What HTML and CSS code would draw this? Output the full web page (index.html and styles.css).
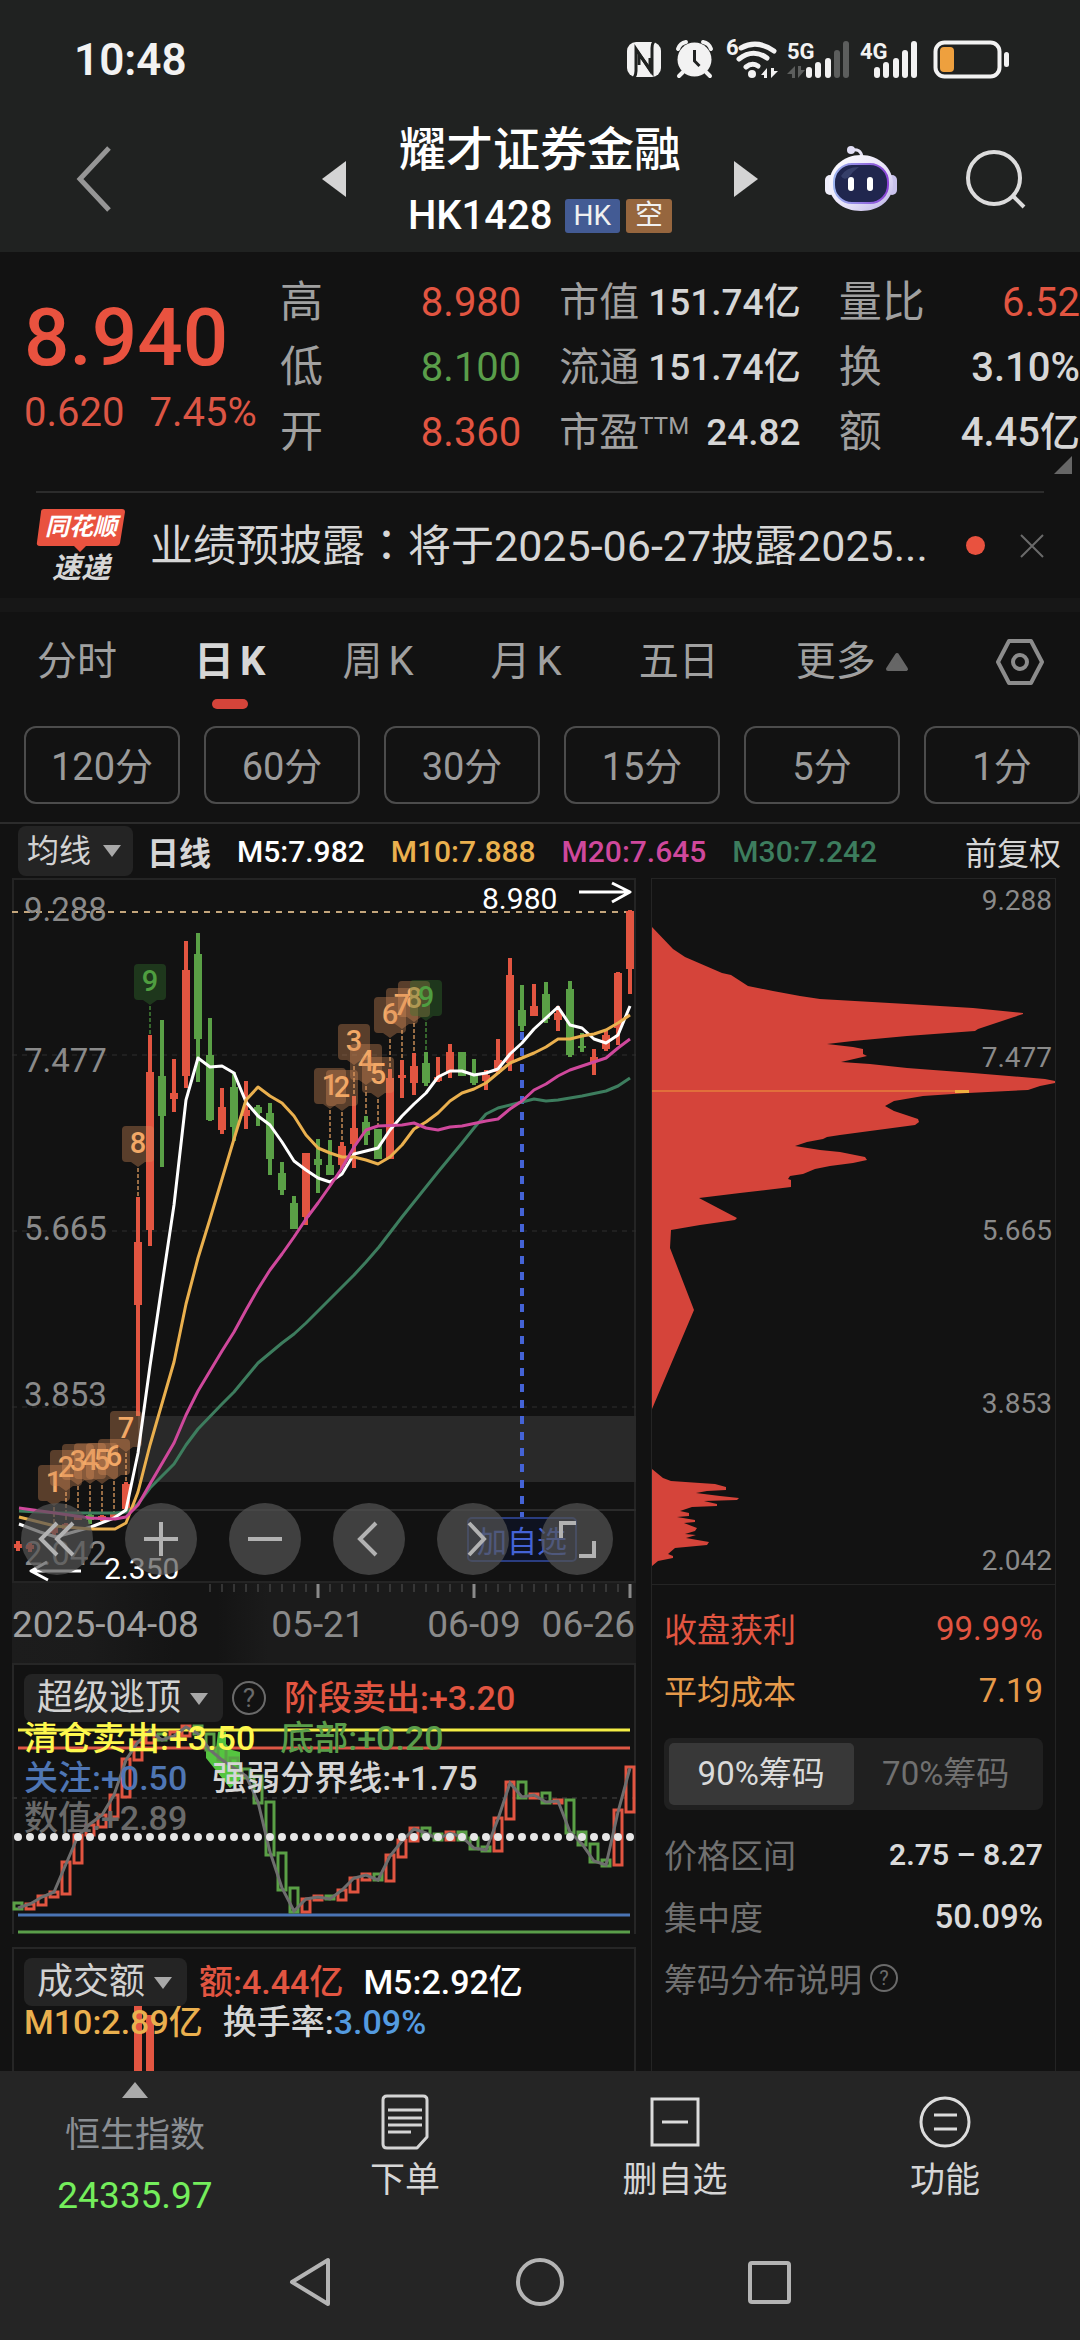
FILE: index.html
```html
<!DOCTYPE html>
<html lang="zh-CN">
<head>
<meta charset="utf-8">
<meta name="viewport" content="width=device-width">
<title>耀才证券金融 HK1428</title>
<link rel="stylesheet" href="styles.css">
</head>
<body>
<header class="top">
  <div class="status">
    <span class="clock">10:48</span>
    <div class="status-icons">
      <svg width="34" height="40" viewBox="628 40 34 40"><rect x="628" y="42" width="34" height="35" rx="9" fill="#f2f2f2"/><g fill="none" stroke="#202221" stroke-width="3"><path d="M635 78q2-3 2-7V49l14 21V58"/><path d="M655 41q-2 3-2 7v24l-13-18v11"/></g></svg>
      <svg class="gap-l" width="38" height="40" viewBox="677 40 38 40"><g fill="none" stroke="#f2f2f2" stroke-width="4" stroke-linecap="round"><path d="M679 49q2-6 8-7M712 49q-2-6-8-7M684 72l-4 4M707 72l4 4"/></g><circle cx="695.500" cy="59.500" r="17" fill="#f2f2f2"/><path d="M695.500 50v11l5 5" fill="none" stroke="#202221" stroke-width="3"/></svg>
      <svg class="gap-m" width="52" height="46" viewBox="727 34 52 46"><text x="727" y="55" class="sig-t">6</text><g fill="none" stroke="#f2f2f2" stroke-width="5" stroke-linecap="round"><path d="M742 48q16-9 33 3M740 59q14-11 28-1M747 67q6-5 12-1"/></g><circle cx="753" cy="74" r="4" fill="#f2f2f2"/><path d="M768 78V68l-6 7h3v3zM772 68v10l7-7h-4v-3z" fill="#f2f2f2"/></svg>
      <svg class="gap-s" width="64" height="40" viewBox="788 40 64 40"><text x="788" y="59" class="sig-t">5G</text><path d="M796 78V66l-8 8h5v4zM799 66v12l7-8h-4v-4z" fill="#5c5e5d"/><g fill="#f2f2f2"><rect x="807" y="67" width="6" height="11" rx="3"/><rect x="816" y="62" width="6" height="16" rx="3"/><rect x="826" y="58" width="6" height="20" rx="3"/></g><g fill="#5c5e5d"><rect x="835" y="50" width="6" height="28" rx="3"/><rect x="844" y="41" width="6" height="37" rx="3"/></g></svg>
      <svg class="gap-s" width="58" height="40" viewBox="861 40 58 40"><text x="861" y="59" class="sig-t">4G</text><g fill="#f2f2f2"><rect x="875" y="67" width="6" height="11" rx="3"/><rect x="884" y="62" width="6" height="16" rx="3"/><rect x="894" y="58" width="6" height="20" rx="3"/><rect x="903" y="50" width="6" height="28" rx="3"/><rect x="912" y="41" width="6" height="37" rx="3"/></g></svg>
      <svg class="gap-l" width="77" height="40" viewBox="933 40 77 40"><rect x="935.500" y="42.500" width="64" height="34" rx="9" fill="none" stroke="#f2f2f2" stroke-width="4"/><rect x="940" y="47" width="14" height="25" rx="4" fill="#eea03e"/><rect x="1004" y="52" width="5" height="15" rx="2.500" fill="#f2f2f2"/></svg>
    </div>
  </div>
  <div class="titlebar">
    <button class="icon-btn back" aria-label="返回"><svg width="36" height="66" viewBox="0 0 36 66"><path d="M33 2L4 33l29 31" fill="none" stroke="#969696" stroke-width="5"/></svg></button>
    <div class="switcher">
      <button class="icon-btn" aria-label="上一只"><svg width="24" height="36" viewBox="0 0 24 36"><path d="M24 0v36L0 18z" fill="#d4d4d4"/></svg></button>
      <div class="stock">
        <h1>耀才证券金融</h1>
        <div class="code"><span>HK1428</span><span class="tag blue">HK</span><span class="tag brown">空</span></div>
      </div>
      <button class="icon-btn" aria-label="下一只"><svg width="24" height="36" viewBox="0 0 24 36"><path d="M0 0v36l24-18z" fill="#d4d4d4"/></svg></button>
    </div>
    <div class="tools">
      <button class="icon-btn" aria-label="智能助手"><svg width="72" height="66" viewBox="0 0 72 66"><defs><linearGradient id="shell" x1="0" y1="0" x2="1" y2="1"><stop offset="0" stop-color="#fff"/><stop offset=".6" stop-color="#e6e1f8"/><stop offset="1" stop-color="#b9b0e6"/></linearGradient><linearGradient id="rim" x1="0" y1="0" x2="1" y2="0"><stop offset="0" stop-color="#9db4f0"/><stop offset="1" stop-color="#8a43d6"/></linearGradient></defs><path d="M26 4q10-2 11 7" fill="none" stroke="#e6e3f5" stroke-width="3"/><circle cx="26" cy="4" r="4" fill="#e2dff6"/><rect x="0" y="29" width="10" height="20" rx="5" fill="#efeefb"/><rect x="62" y="29" width="10" height="20" rx="5" fill="#c9c2ec"/><path d="M36 9c18 0 32 13 32 29S54 65 36 65 4 54 4 38 18 9 36 9z" fill="url(#shell)"/><rect x="9" y="18" width="54" height="39" rx="18" fill="#20264e" stroke="url(#rim)" stroke-width="2"/><path d="M16 30q5-9 18-9-6 4-10 10-5 4-8-1z" fill="#46507c" opacity=".6"/><rect x="23" y="31" width="6" height="14" rx="3" fill="#fff"/><rect x="42" y="31" width="6" height="14" rx="3" fill="#fff"/></svg></button>
      <button class="icon-btn" aria-label="搜索"><svg width="60" height="60" viewBox="0 0 60 60"><g fill="none" stroke="#dcdcdc" stroke-width="4"><circle cx="28" cy="29" r="26"/><path d="M47 47l11 11"/></g></svg></button>
    </div>
  </div>
</header>

<main>
<section class="quote">
  <div class="price">
    <div class="last">8.940</div>
    <div class="chg"><span>0.620</span><span>7.45%</span></div>
  </div>
  <dl class="stats">
    <div><dt>高</dt><dd class="up">8.980</dd></div>
    <div class="mid"><dt>市值</dt><dd>151.74亿</dd></div>
    <div><dt>量比</dt><dd class="up">6.52</dd></div>
    <div><dt>低</dt><dd class="down">8.100</dd></div>
    <div class="mid"><dt>流通</dt><dd>151.74亿</dd></div>
    <div><dt>换</dt><dd>3.10%</dd></div>
    <div><dt>开</dt><dd class="up">8.360</dd></div>
    <div class="mid"><dt>市盈<sup>TTM</sup></dt><dd>24.82</dd></div>
    <div><dt>额</dt><dd>4.45亿</dd></div>
  </dl>
  <svg class="expand" width="18" height="18" viewBox="0 0 18 18"><path d="M18 0v18H0z" fill="#666"/></svg>
</section>

<section class="news">
  <div class="logo">
    <svg width="90" height="44" viewBox="0 0 90 44"><path d="M8 1h78q3 0 3 3l-5 31q-1 3-4 3H50l-6 6-6-6H4q-4 0-3-4L5 4q0-3 3-3z" fill="#e9523f"/></svg>
    <span class="logo-a">同花顺</span>
    <span class="logo-b">速递</span>
  </div>
  <a class="headline" href="#news">业绩预披露<span class="colon" lang="zh-Hant">：</span>将于2025-06-27披露2025...</a>
  <span class="dot"></span>
  <button class="icon-btn" aria-label="关闭"><svg width="24" height="24" viewBox="0 0 24 24"><path d="M1 1l22 22M23 1L1 23" stroke="#6a6a6a" stroke-width="2"/></svg></button>
</section>

<nav class="tabs">
  <button>分时</button><button class="on">日<span>K</span></button><button>周<span>K</span></button><button>月<span>K</span></button><button>五日</button>
  <button class="more">更多<svg width="24" height="20" viewBox="0 0 24 20"><path d="M12 3l9 14H3z" fill="#666" stroke="#666" stroke-width="4" stroke-linejoin="round"/></svg></button>
  <button class="gear" aria-label="设置"><svg width="48" height="48" viewBox="0 0 48 48"><g fill="none" stroke="#8c8c8c" stroke-width="4"><path d="M13 3h22l11 21-11 21H13L2 24z" stroke-linejoin="round"/><circle cx="24" cy="24" r="7"/></g></svg></button>
</nav>
<div class="periods">
  <button>120分</button><button>60分</button><button>30分</button><button>15分</button><button>5分</button><button>1分</button>
</div>

<div class="ma-bar">
  <span class="pick small"><select aria-label="主图指标"><option>均线</option></select></span>
  <b class="line-name">日线</b>
  <span class="w">M5:7.982</span><span class="m10">M10:7.888</span><span class="m20">M20:7.645</span><span class="m30">M30:7.242</span>
  <span class="adj">前复权</span>
</div>

<div class="charts">
  <div class="col-main">
    <div class="panel">
      <svg class="plot" viewBox="12 878 624 705">
        <rect x="13" y="879" width="622" height="703" fill="none" stroke="#242424" stroke-width="2"/>
        <path d="M12 1055H636M12 1231H636M12 1407H636" stroke="#2e2e2e" stroke-dasharray="5 5"/>
        <rect x="138" y="1416" width="498" height="66" fill="#292929"/>
        <path d="M126 1510H636" stroke="#2b2b2b" stroke-width="2"/>
        <path d="M12 912H634" stroke="#c4a67c" stroke-width="2" stroke-dasharray="6 6"/>
        <g class="axis-l"><text x="24" y="921">9.288</text><text x="24" y="1072">7.477</text><text x="24" y="1240">5.665</text><text x="24" y="1406">3.853</text><text x="24" y="1565">2.042</text></g>
        <g id="candles"></g>
        <path d="M522 1032V1517" stroke="#4463d6" stroke-width="4" stroke-dasharray="8 8"/>
        <rect x="468" y="1518" width="108" height="43" rx="4" fill="#0e1220" stroke="#2a3d80" stroke-width="2"/>
        <text x="522" y="1552" text-anchor="middle" class="fav">加自选</text>
        <g id="tags"></g>
        <g fill="none" stroke-width="3" stroke-linejoin="round">
          <path stroke="#3d7d5e" d="M19 1511L60 1513 115 1513 126 1512 138 1504 150 1488 174 1464 186 1445 198 1429 222 1404 234 1392 258 1363 282 1343 294 1334 306 1323 330 1299 340 1289 354 1275 366 1262 379 1247 402 1217 414 1202 438 1172 462 1143 474 1128 486 1114 498 1108 522 1102 534 1099 546 1101 558 1100 582 1096 606 1091 618 1086 630 1078"/>
          <path stroke="#fff" d="M19 1524L40 1532 56 1537 91 1527 114 1518 126 1510 138 1453 150 1366 162 1285 174 1205 186 1100 198 1058 210 1067 222 1066 234 1073 246 1102 258 1116 270 1125 282 1142 294 1161 306 1170 318 1178 330 1182 342 1174 354 1154 366 1151 378 1148 390 1130 402 1116 414 1104 426 1093 438 1077 450 1071 462 1071 474 1075 486 1073 498 1069 510 1054 522 1043 534 1029 546 1018 558 1007 570 1025 582 1028 594 1039 606 1043 618 1035 630 1006"/>
          <path stroke="#eab04e" d="M19 1517L55 1526 90 1529 115 1529 126 1523 138 1492 150 1445 174 1362 186 1304 198 1258 210 1219 222 1179 234 1139 246 1100 258 1087 270 1096 282 1103 294 1116 306 1135 318 1148 330 1153 342 1157 354 1157 366 1160 378 1164 390 1157 402 1145 414 1129 426 1122 438 1113 450 1101 462 1093 474 1089 486 1083 498 1073 510 1063 522 1058 534 1053 546 1047 558 1039 570 1039 582 1036 594 1034 606 1030 618 1023 630 1015"/>
          <path stroke="#cf489c" d="M19 1508L55 1513 90 1518 115 1519 126 1517 138 1505 150 1484 174 1443 186 1415 198 1391 222 1351 234 1332 246 1310 258 1289 270 1270 282 1254 294 1237 306 1219 318 1203 330 1186 342 1168 354 1147 366 1130 378 1126 402 1125 414 1123 426 1128 438 1130 450 1127 462 1126 486 1121 498 1119 510 1109 522 1101 534 1090 546 1084 558 1076 570 1070 582 1066 594 1062 606 1058 618 1048 630 1039"/>
          <path stroke="#fff" d="M579 892H630M612 883L630 892 612 902M81 1571H31M47 1562L31 1571 48 1580"/>
        </g>
        <g class="mark"><text x="482" y="909">8.980</text><text x="104" y="1579">2.350</text></g>
      </svg>
      <div class="chart-tools">
        <button aria-label="快退"><svg viewBox="0 0 72 72"><path d="M36 20L20 36l16 16M52 20L36 36l16 16"/></svg></button>
        <button aria-label="放大"><svg viewBox="0 0 72 72"><path d="M19 36h34M36 19v34"/></svg></button>
        <button aria-label="缩小"><svg viewBox="0 0 72 72"><path d="M19 36h34"/></svg></button>
        <button aria-label="左移"><svg viewBox="0 0 72 72"><path d="M43 20L27 36l16 16"/></svg></button>
        <button aria-label="右移"><svg viewBox="0 0 72 72"><path d="M32 20l15 16-15 16"/></svg></button>
        <button aria-label="全屏"><svg viewBox="0 0 72 72"><path d="M20 35V20h15M38 53h15V38"/></svg></button>
      </div>
    </div>
    <svg class="plot" viewBox="12 1583 624 80">
      <defs><linearGradient id="fade"><stop offset="0" stop-color="#1c1c1c"/><stop offset=".12" stop-color="#1b1b1b"/><stop offset=".26" stop-color="#141414"/><stop offset=".33" stop-color="#141414"/><stop offset=".41" stop-color="#1b1b1b"/></linearGradient></defs>
      <rect x="12" y="1583" width="624" height="80" fill="url(#fade)"/>
      <g id="ticks"></g>
      <g class="dates"><text x="12" y="1637" class="first">2025-04-08</text><text x="318" y="1637" text-anchor="middle">05-21</text><text x="474" y="1637" text-anchor="middle">06-09</text><text x="635" y="1637" text-anchor="end">06-26</text></g>
    </svg>
    <div class="panel sub">
      <svg class="plot" viewBox="12 1663 624 271">
        <path d="M13 1934V1664H635V1934" fill="none" stroke="#262626" stroke-width="2"/>
        <path d="M12 1798H636" stroke="#2c2c2c" stroke-width="2" stroke-dasharray="5 5"/>
        <path d="M18 1915H630" stroke="#4a74b4" stroke-width="3"/>
        <path d="M18 1932H630" stroke="#5a9e4a" stroke-width="3"/>
        <path d="M18 1730H630" stroke="#f4ee45" stroke-width="3"/>
        <path d="M18 1748H630" stroke="#de5745" stroke-width="3"/>
        <path d="M206 1748l10 1 2-17h8v12l6 6 8 2v28l-10 8-8-10-8-10-8-10z" fill="#55c540"/>
        <g id="bars" fill="none" stroke-width="3"></g>
        <path fill="none" stroke="#6e6e6e" stroke-width="3" d="M18 1908L30 1904 42 1897 54 1892 66 1864 78 1836 90 1824 102 1815 114 1795 126 1760 138 1742 150 1731 162 1740 174 1736 186 1727 198 1734 210 1750 222 1760 234 1768 246 1776 258 1802 270 1852 282 1888 294 1911 306 1899 318 1897 330 1899 342 1890 354 1878 366 1875 378 1880 390 1856 402 1841 414 1829 426 1833 438 1839 450 1833 462 1837 474 1848 486 1850 498 1819 510 1783 522 1797 534 1795 546 1802 558 1801 570 1832 582 1844 594 1861 606 1865 618 1812 630 1768"/>
        <path d="M18 1837H631" stroke="#e6e6e6" stroke-width="8" stroke-linecap="round" stroke-dasharray="0 12"/>
      </svg>
      <div class="legend">
        <div class="row"><span class="pick"><select aria-label="副图指标"><option>超级逃顶</option></select></span><button class="help" aria-label="说明">?</button><span class="up after-help">阶段卖出:+3.20</span></div>
        <div class="row"><span class="yellow">清仓卖出:+3.50</span><span class="down">底部:+0.20</span></div>
        <div class="row"><span class="blue-t">关注:+0.50</span><span>强弱分界线:+1.75</span></div>
        <div class="row"><span class="dim">数值:+2.89</span></div>
      </div>
    </div>
    <div class="panel">
      <svg class="plot" viewBox="12 1947 624 124">
        <path d="M13 2072V1948H635V2072" fill="none" stroke="#262626" stroke-width="2"/>
        <path d="M138 2000V2071M150 2015V2071" stroke="#e25541" stroke-width="8"/>
      </svg>
      <div class="legend tight">
        <div class="row"><span class="pick"><select aria-label="成交指标"><option>成交额</option></select></span><span class="up after-pick">额:4.44亿</span><span class="w">M5:2.92亿</span></div>
        <div class="row"><span class="m10">M10:2.89亿</span><span>换手率:<i>3.09%</i></span></div>
      </div>
    </div>
  </div>

  <div class="col-side">
    <svg class="plot" viewBox="651 877 405 707">
      <path d="M652 926L673 948 685 956 722 972 731 974 748 985 773 990 800 995 820 998 907 1003 973 1007 1023 1012 1023 1013 978 1028 975 1030 907 1035 853 1040 827 1043 853 1046 863 1048 863 1053 867 1055 841 1061 870 1063 907 1067 973 1072 1045 1078 1055 1080 1055 1082 1040 1085 1028 1089 968 1092 923 1095 894 1100 885 1105 894 1110 918 1118 919 1121 915 1124 870 1130 840 1134 827 1136 823 1138 807 1141 795 1145 820 1149 840 1151 865 1156 867 1159 853 1162 830 1165 815 1168 803 1173 790 1175 788 1178 791 1179 791 1186 740 1192 699 1197 737 1217 735 1219 700 1224 671 1229 670 1247 694 1309 652 1408z" fill="#d5443a"/>
      <path d="M652 1468L663 1477 671 1480 700 1482 715 1483 726 1486 726 1489 707 1490 696 1492 720 1495 739 1497 737 1499 704 1500 717 1503 717 1505 692 1506 680 1510 689 1512 689 1515 677 1516 695 1519 695 1521 684 1522 697 1527 695 1530 685 1533 696 1534 686 1537 709 1541 707 1544 675 1547 668 1553 673 1555 673 1557 658 1560 652 1565z" fill="#d5443a"/>
      <path d="M652 1090H956" stroke="#ee9a3c" stroke-width="1"/><path d="M955 1090.500H969" stroke="#f0b040" stroke-width="3"/>
      <rect x="651.500" y="877.500" width="404" height="706" fill="none" stroke="#242424"/>
      <g class="axis-r"><text x="1052" y="909">9.288</text><text x="1052" y="1066">7.477</text><text x="1052" y="1239">5.665</text><text x="1052" y="1412">3.853</text><text x="1052" y="1569">2.042</text></g>
    </svg>
    <div class="chips">
      <div class="info up"><span>收盘获利</span><span>99.99%</span></div>
      <div class="info orange"><span>平均成本</span><span>7.19</span></div>
      <div class="seg" role="radiogroup" aria-label="筹码范围">
        <label><input type="radio" name="chip" checked><span>90%筹码</span></label>
        <label><input type="radio" name="chip"><span>70%筹码</span></label>
      </div>
      <div class="info"><span>价格区间</span><b>2.75 – 8.27</b></div>
      <div class="info"><span>集中度</span><em>50.09%</em></div>
      <div class="info note"><span>筹码分布说明</span><button class="help mini" aria-label="筹码分布说明">?</button></div>
    </div>
  </div>
</div>
</main>

<nav class="bottom">
  <a class="index" href="#hsi"><svg width="26" height="16" viewBox="0 0 26 16"><path d="M13 0l13 16H0z" fill="#aaa"/></svg><span>恒生指数</span><strong>24335.97</strong></a>
  <a href="#order"><svg width="50" height="58" viewBox="0 0 50 58"><g fill="none" stroke="#d4d4d4" stroke-width="3"><path d="M7 3h36q4 0 4 4v37L37 55H7q-4 0-4-4V7q0-4 4-4z" stroke-linejoin="round"/><path d="M8 17h34M8 25h34M8 32h34M8 39h23"/></g></svg><span>下单</span></a>
  <a href="#remove"><svg width="50" height="58" viewBox="0 0 50 58"><g fill="none" stroke="#dcdcdc" stroke-width="3"><rect x="2" y="6" width="46" height="46"/><path d="M12 29h26"/></g></svg><span>删自选</span></a>
  <a href="#more"><svg width="52" height="58" viewBox="0 0 52 58"><g fill="none" stroke="#dcdcdc" stroke-width="3"><circle cx="26" cy="29" r="24"/><path d="M15 22h23M15 36h23"/></g></svg><span>功能</span></a>
</nav>
<div class="sysnav">
  <button class="icon-btn" aria-label="后退"><svg width="48" height="52" viewBox="0 0 48 52"><path d="M41 4v44L5 26z" fill="none" stroke="#b4b4b4" stroke-width="4" stroke-linejoin="round"/></svg></button>
  <button class="icon-btn" aria-label="主页"><svg width="48" height="52" viewBox="0 0 48 52"><circle cx="24" cy="26" r="22" fill="none" stroke="#b4b4b4" stroke-width="4"/></svg></button>
  <button class="icon-btn" aria-label="最近任务"><svg width="48" height="52" viewBox="0 0 48 52"><rect x="5" y="7" width="39" height="39" rx="2" fill="none" stroke="#b4b4b4" stroke-width="4"/></svg></button>
</div>
<script src="chart.js"></script>
</body>
</html>
```

FILE: styles.css
```css
* { box-sizing: border-box; }
body {
  margin: 0;
  min-height: 100vh;
  display: flex;
  flex-direction: column;
  background: #252525;
  color: #d6d6d6;
  font-family: Roboto, "Noto Sans CJK SC", sans-serif;
  font-size: 40px;
}
button, select { font: inherit; color: inherit; background: none; border: 0; padding: 0; margin: 0; }
a { color: inherit; text-decoration: none; }
svg { display: block; overflow: visible; }
h1, dl, dd { margin: 0; }
main { background: #121212; }
.icon-btn { display: block; flex: none; line-height: 0; }

.up { color: #e25541; }
.down { color: #5a9e4a; }
.w { color: #fff; }
.m10 { color: #eab04e; }
.m20 { color: #cf489c; }
.m30 { color: #3d7d5e; }
.yellow { color: #fdf84e; }
.blue-t { color: #4f76b4; }
.dim { color: #6a6a6a; }
.orange { color: #e69a4a; }

/* Header */
.top { background: #202221; }
.status {
  display: flex;
  justify-content: space-between;
  padding: 40px 70px 0 74px;
  height: 80px;
}
.clock { font-size: 44px; line-height: 40px; font-weight: 600; color: #f2f2f2; }
.status-icons { display: flex; align-items: flex-end; }
.gap-l { margin-left: 15px; }
.gap-m { margin-left: 12px; }
.gap-s { margin-left: 9px; }
.sig-t { font-size: 22px; font-weight: 700; fill: #f2f2f2; }
.titlebar {
  display: grid;
  grid-template-columns: 1fr auto 1fr;
  align-items: center;
  padding: 40px 54px 14px;
}
.back { margin-left: 22px; }
.switcher { display: flex; align-items: center; gap: 53px; }
.stock { text-align: center; }
h1 { font-size: 47px; line-height: 60px; font-weight: 500; color: #fff; }
.code {
  display: flex;
  justify-content: center;
  align-items: center;
  gap: 6px;
  margin-top: 14px;
  line-height: 44px;
  font-size: 40px;
  font-weight: 500;
  color: #fff;
}
.code span:first-child { margin-right: 6px; }
.tag { font-size: 28px; line-height: 34px; font-weight: 400; padding: 0 9px; border-radius: 3px; color: #f0f0f0; }
.blue { background: #435b94; }
.brown { background: #96663e; }
.tools { display: flex; justify-content: flex-end; align-items: center; gap: 69px; }

/* Quote */
.quote {
  position: relative;
  display: grid;
  grid-template-columns: 256px 1fr;
  padding: 18px 0 26px 24px;
}
.price { color: #e9523f; padding-top: 26px; }
.last { font-size: 80px; line-height: 84px; font-weight: 500; }
.chg { display: flex; gap: 25px; line-height: 50px; margin-top: 8px; color: #dc5544; }
.stats { display: grid; grid-template-columns: repeat(3, 1fr); column-gap: 38px; }
.stats div { display: flex; justify-content: space-between; line-height: 65px; white-space: nowrap; }
.stats dt { font-size: 43px; color: #a0a0a0; }
.stats .mid { font-size: 37px; }
.stats .mid dt { font-size: 40px; }
.stats dd { font-weight: 500; }
.stats dd.up, .stats dd.down { font-weight: 400; }
sup { font-size: 24px; line-height: 0; vertical-align: 12px; }
.expand { position: absolute; right: 8px; bottom: 17px; }

/* News strip */
.news {
  display: flex;
  align-items: center;
  height: 107px;
  margin: 0 36px;
  border-top: 2px solid #2c2c2c;
}
.logo { display: grid; width: 90px; margin-right: 24px; font-weight: 700; font-style: italic; }
.logo svg, .logo-a { grid-area: 1 / 1; }
.logo-a { font-size: 24px; line-height: 38px; text-align: center; color: #fff; }
.logo-b { font-size: 29px; line-height: 32px; text-align: center; }
.headline { flex: 1; font-size: 43px; line-height: 60px; white-space: nowrap; }
.colon { font-family: "Noto Sans CJK TC", sans-serif; line-height: 40px; }
.dot { width: 19px; height: 19px; border-radius: 50%; background: #e9523f; margin-right: 35px; }

/* Tabs */
.tabs {
  display: flex;
  align-items: center;
  gap: 77px;
  height: 128px;
  padding: 0 36px 14px 37px;
  border-top: 14px solid #171717;
  color: #a0a0a0;
  line-height: 40px;
}
.tabs button { position: relative; display: flex; align-items: center; gap: 6px; white-space: nowrap; }
.tabs .more { gap: 9px; }
.tabs .on { color: #d6d6d6; font-weight: 700; }
.tabs .on::after {
  content: "";
  position: absolute;
  left: 50%;
  bottom: -27px;
  width: 36px;
  height: 10px;
  margin-left: -18px;
  border-radius: 5px;
  background: #d5443a;
}
.tabs .gear { margin-left: auto; }
.periods {
  display: grid;
  grid-template-columns: repeat(6, 1fr);
  gap: 24px;
  padding: 0 0 18px 24px;
  border-bottom: 2px solid #2c2c2c;
}
.periods button {
  height: 78px;
  padding-bottom: 4px;
  border: 2px solid #4c4c4c;
  border-radius: 12px;
  font-size: 38px;
  color: #9a9a9a;
}

/* Moving-average legend */
.ma-bar {
  display: flex;
  align-items: center;
  gap: 26px;
  height: 54px;
  padding: 0 19px 0 18px;
  font-size: 30px;
  font-weight: 500;
}
.line-name { font-size: 32px; margin: 0 0 0 -12px; }
.adj { margin-left: auto; font-size: 32px; font-weight: 400; }
.pick { position: relative; display: inline-block; font-size: 36px; font-weight: 400; }
.pick select {
  appearance: none;
  display: block;
  height: 48px;
  padding: 0 41px 0 13px;
  border-radius: 8px;
  background: #242424;
  color: #d2d2d2;
}
.pick::after {
  content: "";
  position: absolute;
  right: 15px;
  top: 19px;
  border: 9px solid transparent;
  border-top: 12px solid #a8a8a8;
  border-bottom: 0;
  pointer-events: none;
}
.pick.small { font-size: 32px; }
.pick.small select { height: 50px; padding-left: 9px; }
.pick.small::after { right: 12px; }

/* Charts */
.charts { display: grid; grid-template-columns: 624fr 405fr; gap: 15px; margin: 0 24px 0 12px; }
.panel { position: relative; }
.sub { margin-bottom: 13px; }
.plot { width: 100%; height: auto; }
.axis-l text { font-size: 33px; fill: #8a8a8a; }
.axis-r text { font-size: 28px; fill: #8a8a8a; text-anchor: end; }
.mark text { font-size: 30px; fill: #fff; }
.fav { font-size: 30px; fill: #4463d6; }
.tag-num { font-size: 29px; font-weight: 500; text-anchor: middle; }
.dates text { font-size: 37px; fill: #8a8a8a; }
.dates .first { fill: #a0a0a0; }
.chart-tools {
  position: absolute;
  left: 9px;
  right: 23px;
  bottom: 8px;
  display: flex;
  justify-content: space-between;
}
.chart-tools button { width: 72px; height: 72px; border-radius: 50%; background: rgba(84, 84, 84, 0.7); }
.chart-tools path { fill: none; stroke: #b2b2b2; stroke-width: 4; }
.legend { position: absolute; left: 12px; top: 15px; font-size: 34px; font-weight: 500; white-space: nowrap; }
.row { display: flex; align-items: center; height: 40px; line-height: 40px; gap: 25px; }
.tight .row { gap: 20px; }
.row i { font-style: normal; color: #549be0; }
.row .help { margin-left: -16px; }
.row .after-help { margin-left: -7px; }
.row .after-pick { margin-left: -8px; }
.help {
  width: 34px;
  height: 34px;
  border: 2px solid #6a6a6a;
  border-radius: 50%;
  color: #6a6a6a;
  font-size: 26px;
  line-height: 30px;
  font-weight: 400;
}
.help.mini { width: 28px; height: 28px; font-size: 20px; line-height: 24px; margin-left: 8px; }

/* Chip distribution */
.col-side { display: flex; flex-direction: column; }
.chips {
  flex: 1;
  padding: 12px 12px 0 12px;
  border: solid #242424;
  border-width: 0 1px;
  font-size: 33px;
}
.info { display: flex; justify-content: space-between; align-items: center; height: 62px; }
.info:not(.up):not(.orange) { color: #707070; }
.info b { font-size: 30px; font-weight: 600; color: #dadada; }
.info em { font-style: normal; font-weight: 500; color: #dadada; }
.info.note { justify-content: flex-start; }
.seg {
  display: grid;
  grid-template-columns: 1fr 1fr;
  margin: 17px 0 13px;
  padding: 5px;
  border-radius: 8px;
  background: #202020;
  color: #707070;
}
.seg label { text-align: center; }
.seg input { position: absolute; opacity: 0; }
.seg span { display: block; line-height: 62px; border-radius: 5px; }
.seg input:checked + span { background: #383838; color: #dadada; }

/* Bottom bars */
.bottom { display: grid; grid-template-columns: repeat(4, 1fr); height: 153px; background: #252525; font-size: 35px; }
.bottom a { display: flex; flex-direction: column; align-items: center; padding-top: 22px; line-height: 40px; }
.bottom span { margin-top: 10px; }
.bottom .index { padding-top: 11px; }
.bottom .index span { margin-top: 18px; color: #8a8e93; }
.index strong { margin-top: 20px; font-size: 37px; font-weight: 400; color: #74ee5c; }
.sysnav { flex: 1; display: flex; justify-content: center; align-items: center; gap: 181px; padding: 32px 0; }
```

FILE: chart.js
```js
const RED = "#e25541";
const GREEN = "#5aa046";

// Daily candles: x, high, body top, body bottom, low, 1 = up / 0 = down
const candles = [
  [18,1541,1544,1548,1551,1],[30,1543,1545,1549,1552,1],[54,1524,1527,1533,1536,1],[66,1523,1524,1529,1533,1],
  [78,1516,1517,1520,1520,1],[90,1512,1515,1520,1524,0],[102,1515,1516,1520,1521,1],[114,1513,1514,1517,1517,1],
  [126,1482,1484,1509,1510,1],[138,1197,1242,1305,1416,1],[150,1035,1072,1230,1246,1],[162,1020,1076,1116,1167,0],
  [174,1059,1093,1099,1112,1],[186,941,970,1076,1088,1],[198,933,954,1039,1082,0],[210,1018,1055,1120,1121,0],
  [222,1088,1107,1130,1134,1],[234,1072,1087,1127,1141,0],[246,1081,1110,1116,1129,1],[258,1105,1107,1113,1126,0],
  [270,1103,1113,1159,1175,0],[282,1162,1173,1190,1195,0],[294,1196,1203,1229,1229,0],[306,1153,1153,1217,1225,1],
  [318,1139,1159,1165,1193,0],[330,1140,1165,1175,1175,0],[342,1142,1146,1165,1169,1],[354,1096,1128,1144,1168,1],
  [366,1116,1122,1135,1145,0],[378,1129,1129,1159,1159,0],[390,1069,1078,1159,1159,1],[402,1060,1075,1078,1098,1],
  [414,1053,1066,1083,1095,1],[426,1052,1063,1083,1086,0],[438,1057,1077,1081,1082,1],[450,1044,1052,1072,1078,1],
  [462,1052,1052,1076,1076,0],[474,1059,1074,1083,1085,0],[486,1070,1075,1081,1090,1],[498,1039,1060,1072,1074,1],
  [510,958,975,1063,1071,1],[522,985,1010,1026,1031,0],[534,984,1006,1016,1016,1],[546,982,994,1019,1023,0],
  [558,1006,1013,1020,1031,1],[570,981,989,1055,1057,0],[582,1033,1046,1048,1052,0],[594,1049,1057,1062,1075,1],
  [606,1030,1035,1049,1051,1],[618,972,973,1028,1045,1],[630,910,911,969,994,1]
];

// Nine-count tags: x, top, digit, stem end
const tags = [
  [54,1465,1,1524],[66,1450,2,1522],[78,1444,3,1516],[90,1443,4,1512],[102,1443,5,1514],[114,1439,6,1512],[126,1411,7,1482],
  [138,1126,8,1197],[150,964,9,1035],[330,1068,1,1140],[342,1070,2,1142],[354,1024,3,1096],[366,1044,4,1116],
  [378,1057,5,1129],[390,997,6,1069],[402,988,7,1060],[414,981,8,1053],[426,980,9,1052]
];

// Oscillator boxes, one every 12 units: top, bottom, up flag
const bars = [
  [1903,1909,0],[1904,1909,1],[1896,1905,1],[1892,1897,1],[1862,1894,1],[1835,1863,1],[1825,1835,1],[1815,1827,1],
  [1795,1817,1],[1759,1797,1],[1742,1760,1],[1733,1743,1],[1734,1740,0],[1732,1738,1],[1726,1736,1],[1726,1734,0],
  [1734,1750,0],[1748,1760,0],[1758,1768,0],[1769,1778,0],[1776,1803,0],[1802,1855,0],[1853,1890,0],[1888,1912,0],
  [1899,1912,1],[1896,1900,1],[1896,1899,0],[1890,1900,1],[1878,1892,1],[1874,1880,1],[1874,1880,0],[1855,1881,1],
  [1840,1857,1],[1828,1841,1],[1828,1836,0],[1834,1840,0],[1832,1840,1],[1832,1840,0],[1838,1849,0],[1847,1851,0],
  [1818,1851,1],[1782,1819,1],[1782,1798,0],[1794,1798,1],[1793,1803,0],[1800,1803,1],[1800,1833,0],[1832,1845,0],
  [1844,1862,0],[1860,1866,0],[1810,1865,1],[1767,1812,1]
];

document.getElementById("candles").innerHTML = candles.map(([x, hi, top, bot, lo, up]) =>
  `<path d="M${x - 2} ${hi}h4V${top}h2V${bot}h-2V${lo}h-4V${bot}h-2V${top}h2z" fill="${up ? RED : GREEN}"/>`
).join("");

document.getElementById("tags").innerHTML = tags.map(([x, y, n, end]) => {
  const c = n === 9 ? "#4f9e40" : "#f2a866";
  const bg = n === 9 ? "#357a30" : "#d98c58";
  return `<path d="M${x} ${y + 42}V${end}" stroke="${c}" stroke-width="2" stroke-dasharray="4 2" opacity=".6"/>` +
    `<path d="M${x - 12} ${y}h24q4 0 4 4v28q0 4-4 4h-5l-7 5-7-5h-5q-4 0-4-4v-28q0-4 4-4z" fill="${bg}" opacity=".36"/>` +
    `<text class="tag-num" x="${x}" y="${y + 27}" fill="${c}">${n}</text>`;
}).join("");

document.getElementById("bars").innerHTML = bars.map(([top, bot, up], i) =>
  `<rect x="${14 + i * 12}" y="${top}" width="8" height="${bot - top}" stroke="${up ? RED : GREEN}"/>`
).join("");

let ticks = "";
for (let x = 210; x <= 630; x += 12) {
  const major = x === 318 || x === 474 || x === 630;
  ticks += `<path d="M${x} 1584v${major ? 14 : 8}" stroke="${major ? "#8a8a8a" : "#555"}" stroke-width="${major ? 3 : 1}"/>`;
}
document.getElementById("ticks").innerHTML = ticks;
```
